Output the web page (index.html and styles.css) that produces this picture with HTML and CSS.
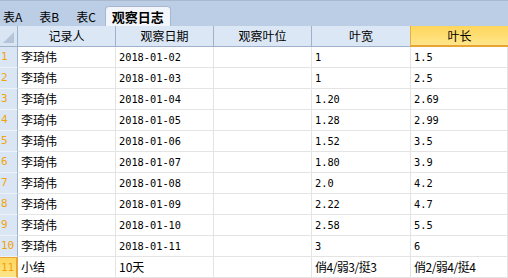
FILE: index.html
```html
<!DOCTYPE html>
<html>
<head>
<meta charset="utf-8">
<link rel="stylesheet" href="styles.css">
</head>
<body>
<div class="tabs">
  <span class="tab">表A</span>
  <span class="tab">表B</span>
  <span class="tab">表C</span>
  <span class="tab active">观察日志</span>
</div>
<div class="grid">
  <div class="corner"><span class="tri"></span></div>
  <div class="hd">记录人</div>
  <div class="hd">观察日期</div>
  <div class="hd">观察叶位</div>
  <div class="hd">叶宽</div>
  <div class="hd sel">叶长</div>

  <div class="rn">1</div><div class="c">李琦伟</div><div class="c n">2018-01-02</div><div class="c"></div><div class="c n">1</div><div class="c n">1.5</div>
  <div class="rn">2</div><div class="c">李琦伟</div><div class="c n">2018-01-03</div><div class="c"></div><div class="c n">1</div><div class="c n">2.5</div>
  <div class="rn">3</div><div class="c">李琦伟</div><div class="c n">2018-01-04</div><div class="c"></div><div class="c n">1.20</div><div class="c n">2.69</div>
  <div class="rn">4</div><div class="c">李琦伟</div><div class="c n">2018-01-05</div><div class="c"></div><div class="c n">1.28</div><div class="c n">2.99</div>
  <div class="rn">5</div><div class="c">李琦伟</div><div class="c n">2018-01-06</div><div class="c"></div><div class="c n">1.52</div><div class="c n">3.5</div>
  <div class="rn">6</div><div class="c">李琦伟</div><div class="c n">2018-01-07</div><div class="c"></div><div class="c n">1.80</div><div class="c n">3.9</div>
  <div class="rn">7</div><div class="c">李琦伟</div><div class="c n">2018-01-08</div><div class="c"></div><div class="c n">2.0</div><div class="c n">4.2</div>
  <div class="rn">8</div><div class="c">李琦伟</div><div class="c n">2018-01-09</div><div class="c"></div><div class="c n">2.22</div><div class="c n">4.7</div>
  <div class="rn">9</div><div class="c">李琦伟</div><div class="c n">2018-01-10</div><div class="c"></div><div class="c n">2.58</div><div class="c n">5.5</div>
  <div class="rn">10</div><div class="c">李琦伟</div><div class="c n">2018-01-11</div><div class="c"></div><div class="c n">3</div><div class="c n">6</div>
  <div class="rn rsel">11</div><div class="c">小结</div><div class="c">10天</div><div class="c"></div><div class="c sm">俏4/弱3/挺3</div><div class="c sm">俏2/弱4/挺4</div>
</div>
</body>
</html>
```

FILE: styles.css
```css
html, body {
  margin: 0;
  padding: 0;
  background: #ffffff;
  width: 508px;
  height: 278px;
  overflow: hidden;
  font-family: "Noto Sans CJK SC", "DejaVu Sans", sans-serif;
  font-size: 12px;
  color: #000;
}

.tabs {
  border-top: 1px solid #a9b8cc;
  background: #bccee5;
  display: flex;
  align-items: flex-end;
  padding-left: 1px;
  box-sizing: border-box;
  height: 26px;
}

.tab {
  height: 19px;
  line-height: 19px;
  padding: 0 4px 0 2px;
  margin-right: 11px;
  font-size: 12px;
  white-space: nowrap;
}

.tab.active {
  margin-left: -6px;
  padding: 0 6px;
  background: #f2f6fb;
  border: 1px solid #a6b8cf;
  border-bottom: none;
  border-radius: 4px 4px 0 0;
  font-weight: bold;
  font-size: 13px;
  height: 19px;
}

.grid {
  display: grid;
  grid-template-columns: 18px 98px 98px 98px 99px 97px;
  grid-auto-rows: 21px;
}

.corner {
  background: #dae5f3;
  border-right: 1px solid #9eb3cb;
  border-bottom: 1px solid #9eb3cb;
  box-sizing: border-box;
  position: relative;
}

.tri {
  position: absolute;
  right: 3px;
  bottom: 3px;
  width: 0;
  height: 0;
  border-left: 11px solid transparent;
  border-bottom: 11px solid #b5c4d8;
}

.hd {
  background: #dbe7f5;
  border-right: 1px solid #9eb3cb;
  border-bottom: 1px solid #9eb3cb;
  box-sizing: border-box;
  text-align: center;
  line-height: 20px;
  font-size: 12px;
}

.hd.sel {
  background: linear-gradient(#ffd65c, #ffe58a);
  border-bottom: 2px solid #e8a434;
  border-left: 1px solid #e3b14b;
  border-right: none;
  margin-left: -1px;
  line-height: 19px;
}

.rn {
  background: #dbe6f4;
  border-right: 1px solid #9eb3cb;
  border-bottom: 1px solid #edf2f9;
  box-sizing: border-box;
  color: #f0a30a;
  font-family: "DejaVu Sans Mono", monospace;
  font-size: 11px;
  line-height: 20px;
  padding-left: 1px;
}

.rn.rsel {
  background: linear-gradient(#ffd65c, #ffe58a);
  border-right: 2px solid #e8a434;
  border-top: 1px solid #e8a434;
  line-height: 19px;
}

.c {
  border-right: 1px solid #e4e4e4;
  border-bottom: 1px solid #e4e4e4;
  box-sizing: border-box;
  padding-left: 3px;
  line-height: 20px;
  white-space: nowrap;
  overflow: hidden;
}

.c.n {
  font-family: "DejaVu Sans Mono", monospace;
  font-size: 10.3px;
}

.c.sm {
  font-size: 12px;
  letter-spacing: -0.5px;
}
```
